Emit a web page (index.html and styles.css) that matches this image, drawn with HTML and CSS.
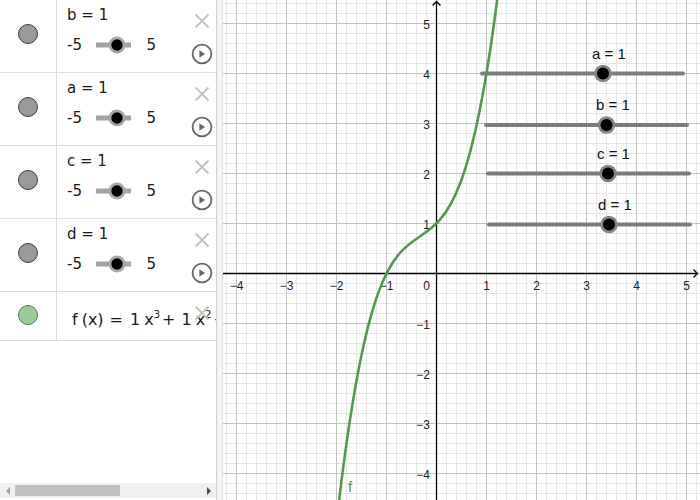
FILE: index.html
```html
<!DOCTYPE html>
<html>
<head>
<meta charset="utf-8">
<link rel="stylesheet" href="styles.css">
</head>
<body>
<div class="app">
  <div class="algebra">
    <div class="row">
      <div class="marker"><span class="dot"></span></div>
      <div class="content">
        <div class="def">b = 1</div>
        <div class="range"><span>-5</span>
          <svg class="mini" viewBox="0 0 35 20"><line x1="0" y1="10" x2="35" y2="10"/><circle class="ring" cx="21" cy="10" r="8.5"/><circle class="knob" cx="21" cy="10" r="5.7"/></svg>
          <span>5</span></div>
      </div>
      <div class="controls">
        <svg class="close" viewBox="0 0 16 16"><path d="M1.5 1.5L14.5 14.5M14.5 1.5L1.5 14.5"/></svg>
        <svg class="play" viewBox="0 0 22 22"><circle cx="11" cy="11" r="9.4"/><path d="M8.4 7.3L14 11L8.4 14.7Z"/></svg>
      </div>
    </div>
    <div class="row">
      <div class="marker"><span class="dot"></span></div>
      <div class="content">
        <div class="def">a = 1</div>
        <div class="range"><span>-5</span>
          <svg class="mini" viewBox="0 0 35 20"><line x1="0" y1="10" x2="35" y2="10"/><circle class="ring" cx="21" cy="10" r="8.5"/><circle class="knob" cx="21" cy="10" r="5.7"/></svg>
          <span>5</span></div>
      </div>
      <div class="controls">
        <svg class="close" viewBox="0 0 16 16"><path d="M1.5 1.5L14.5 14.5M14.5 1.5L1.5 14.5"/></svg>
        <svg class="play" viewBox="0 0 22 22"><circle cx="11" cy="11" r="9.4"/><path d="M8.4 7.3L14 11L8.4 14.7Z"/></svg>
      </div>
    </div>
    <div class="row">
      <div class="marker"><span class="dot"></span></div>
      <div class="content">
        <div class="def">c = 1</div>
        <div class="range"><span>-5</span>
          <svg class="mini" viewBox="0 0 35 20"><line x1="0" y1="10" x2="35" y2="10"/><circle class="ring" cx="21" cy="10" r="8.5"/><circle class="knob" cx="21" cy="10" r="5.7"/></svg>
          <span>5</span></div>
      </div>
      <div class="controls">
        <svg class="close" viewBox="0 0 16 16"><path d="M1.5 1.5L14.5 14.5M14.5 1.5L1.5 14.5"/></svg>
        <svg class="play" viewBox="0 0 22 22"><circle cx="11" cy="11" r="9.4"/><path d="M8.4 7.3L14 11L8.4 14.7Z"/></svg>
      </div>
    </div>
    <div class="row">
      <div class="marker"><span class="dot"></span></div>
      <div class="content">
        <div class="def">d = 1</div>
        <div class="range"><span>-5</span>
          <svg class="mini" viewBox="0 0 35 20"><line x1="0" y1="10" x2="35" y2="10"/><circle class="ring" cx="21" cy="10" r="8.5"/><circle class="knob" cx="21" cy="10" r="5.7"/></svg>
          <span>5</span></div>
      </div>
      <div class="controls">
        <svg class="close" viewBox="0 0 16 16"><path d="M1.5 1.5L14.5 14.5M14.5 1.5L1.5 14.5"/></svg>
        <svg class="play" viewBox="0 0 22 22"><circle cx="11" cy="11" r="9.4"/><path d="M8.4 7.3L14 11L8.4 14.7Z"/></svg>
      </div>
    </div>
    <div class="row fn">
      <div class="marker"><span class="dot green"></span></div>
      <div class="content">
        <div class="formula"><span>f</span><span class="g">(x)</span><span class="eq">=</span><span>1</span><span class="g">x</span><sup>3</sup><span class="pl">+</span><span>1</span><span class="g">x</span><sup>2</sup><span class="pl">+</span><span>1</span><span class="g">x</span><span class="pl">+</span><span>1</span></div>
      </div>
      <div class="controls">
        <svg class="close" viewBox="0 0 16 16"><path d="M1.5 1.5L14.5 14.5M14.5 1.5L1.5 14.5"/></svg>
      </div>
    </div>
    <div class="spacer"></div>
    <div class="hscroll">
      <div class="arrow-btn"><span class="arrow-left"></span></div>
      <div class="track"><div class="thumb"></div></div>
      <div class="arrow-btn"><span class="arrow-right"></span></div>
    </div>
  </div>
  <div class="divider"></div>
  <div class="graphics">
    <svg class="plot" viewBox="223 0 477 500" width="477" height="500">
      <defs>
        <pattern id="grid" x="411" y="248" width="50" height="50" patternUnits="userSpaceOnUse">
          <path class="minor" d="M5.5 0V50M15.5 0V50M35.5 0V50M45.5 0V50M0 5.5H50M0 15.5H50M0 35.5H50M0 45.5H50"/>
          <path class="major" d="M25.5 0V50M0 25.5H50"/>
        </pattern>
      </defs>
      <rect x="223" y="0" width="477" height="500" fill="#fff"/>
      <rect x="223" y="0" width="477" height="500" fill="url(#grid)"/>
      <path class="axis" d="M223 273.5H697.5M693.5 269.5L697.5 273.5L693.5 277.5"/>
      <path class="axis" d="M436.5 500V1.5M432.5 5.5L436.5 1.5L440.5 5.5"/>
      <g class="xlab">
        <text x="236.5" y="290">−4</text>
        <text x="286.5" y="290">−3</text>
        <text x="336.5" y="290">−2</text>
        <text x="386.5" y="290">−1</text>
        <text x="426.7" y="290">0</text>
        <text x="486.5" y="290">1</text>
        <text x="536.5" y="290">2</text>
        <text x="586.5" y="290">3</text>
        <text x="636.5" y="290">4</text>
        <text x="686.5" y="290">5</text>
      </g>
      <g class="ylab">
        <text x="430" y="28.5">5</text>
        <text x="430" y="78.5">4</text>
        <text x="430" y="128.5">3</text>
        <text x="430" y="178.5">2</text>
        <text x="430" y="228.5">1</text>
        <text x="430" y="328.5">−1</text>
        <text x="430" y="378.5">−2</text>
        <text x="430" y="428.5">−3</text>
        <text x="430" y="478.5">−4</text>
      </g>
      <path class="curve" d="M336.5 523.5C391.5 28.5 446.5 441 501.5 -35.85"/>
      <text class="flabel" x="348" y="492">f</text>
      <g class="gslider">
        <line x1="482" y1="73.5" x2="683" y2="73.5"/>
        <circle class="ring" cx="603" cy="73.5" r="8.7"/>
        <circle class="knob" cx="603" cy="73.5" r="6"/>
        <text x="592" y="58.5">a = 1</text>
      </g>
      <g class="gslider">
        <line x1="486" y1="125" x2="687" y2="125"/>
        <circle class="ring" cx="606.5" cy="125" r="8.7"/>
        <circle class="knob" cx="606.5" cy="125" r="6"/>
        <text x="596" y="110">b = 1</text>
      </g>
      <g class="gslider">
        <line x1="488" y1="173.5" x2="689" y2="173.5"/>
        <circle class="ring" cx="608" cy="173.5" r="8.7"/>
        <circle class="knob" cx="608" cy="173.5" r="6"/>
        <text x="597" y="158.5">c = 1</text>
      </g>
      <g class="gslider">
        <line x1="489" y1="224.5" x2="690" y2="224.5"/>
        <circle class="ring" cx="609" cy="224.5" r="8.7"/>
        <circle class="knob" cx="609" cy="224.5" r="6"/>
        <text x="598" y="209.5">d = 1</text>
      </g>
    </svg>
  </div>
</div>
</body>
</html>
```
FILE: styles.css
```css
html, body {
  margin: 0;
  padding: 0;
  background: #fff;
}
body {
  width: 700px;
  height: 500px;
  overflow: hidden;
  font-family: "DejaVu Sans", sans-serif;
  color: #1a1a1a;
}
.app {
  display: flex;
  height: 500px;
}
.algebra {
  width: 216px;
  flex: none;
  display: flex;
  flex-direction: column;
  overflow: hidden;
  background: #fff;
}
.row {
  display: flex;
  flex: none;
  height: 72px;
  border-bottom: 1px solid #dcdcdc;
}
.row.fn {
  height: 48px;
}
.marker {
  width: 57px;
  flex: none;
  box-sizing: border-box;
  border-right: 1px solid #dcdcdc;
  display: flex;
  justify-content: center;
  align-items: flex-start;
  padding-top: 24px;
}
.fn .marker {
  padding-top: 13px;
}
.dot {
  width: 18px;
  height: 18px;
  border-radius: 50%;
  background: #999;
  border: 1px solid #3c3c3c;
  margin-left: -1px;
}
.dot.green {
  background: #99cc99;
  border-color: #4d7d4d;
}
.content {
  flex: 1;
  min-width: 0;
  padding: 5px 0 0 10px;
  font-size: 15px;
}
.fn .content {
  padding: 18px 0 0 15px;
}
.def {
  height: 20px;
  line-height: 20px;
  white-space: nowrap;
}
.range {
  display: flex;
  align-items: center;
  height: 20px;
  line-height: 20px;
  margin-top: 10px;
}
.mini {
  width: 35px;
  height: 20px;
  margin: 0 15px 0 14.5px;
  overflow: visible;
}
.mini line {
  stroke: #a3a3a3;
  stroke-width: 5;
}
.mini .ring {
  fill: #a8a8a8;
}
.mini .knob {
  fill: #000;
}
.controls {
  width: 25px;
  flex: none;
  margin-right: 2px;
  display: flex;
  flex-direction: column;
  align-items: center;
  padding-top: 13px;
}
.close {
  width: 16px;
  height: 16px;
  flex: none;
}
.close path {
  stroke: #c2c2c2;
  stroke-width: 1.8;
  fill: none;
}
.play {
  width: 22px;
  height: 22px;
  flex: none;
  margin-top: 14px;
}
.play circle {
  fill: none;
  stroke: #666;
  stroke-width: 1.8;
}
.play path {
  fill: #666;
}
.formula {
  font-size: 16px;
  line-height: 20px;
  white-space: nowrap;
  color: #1a1a1a;
}
.formula .g {
  margin-left: 4px;
}
.formula .eq {
  margin: 0 7px 0 6px;
}
.formula .pl {
  margin: 0 6px 0 2px;
}
.formula sup {
  font-size: 10px;
  line-height: 0;
  vertical-align: 7px;
}
.spacer {
  flex: 1;
}
.hscroll {
  flex: none;
  height: 15px;
  margin-bottom: 2px;
  background: #f0f0f0;
  display: flex;
  align-items: center;
}
.arrow-btn {
  width: 15px;
  height: 15px;
  flex: none;
  display: flex;
  align-items: center;
  justify-content: center;
}
.arrow-left {
  width: 0;
  height: 0;
  border-top: 4px solid transparent;
  border-bottom: 4px solid transparent;
  border-right: 4px solid #a3a3a3;
}
.arrow-right {
  width: 0;
  height: 0;
  border-top: 4px solid transparent;
  border-bottom: 4px solid transparent;
  border-left: 4px solid #4a4a4a;
}
.track {
  flex: 1;
  height: 11px;
}
.thumb {
  width: 105px;
  height: 11px;
  background: #c1c1c1;
}
.divider {
  width: 7px;
  flex: none;
  box-sizing: border-box;
  border-left: 1px solid #cdcdcd;
  border-right: 1px solid #dedede;
  background: #f3f3f3;
}
.graphics {
  flex: 1;
  overflow: hidden;
}
.plot {
  display: block;
}
.minor {
  stroke: #e6e6e6;
  stroke-width: 1;
  fill: none;
}
.major {
  stroke: #c3c3c3;
  stroke-width: 1;
  fill: none;
}
.axis {
  stroke: #000;
  stroke-width: 1.3;
  fill: none;
}
.xlab text, .ylab text {
  font-family: "Liberation Sans", Arial, sans-serif;
  font-size: 12px;
  fill: #222;
}
.xlab text {
  text-anchor: middle;
}
.ylab text {
  text-anchor: end;
}
.curve {
  fill: none;
  stroke: #4f9a4f;
  stroke-width: 2.6;
}
.flabel {
  font-family: "Liberation Sans", Arial, sans-serif;
  font-size: 15px;
  fill: #4f9a4f;
}
.gslider line {
  stroke: #7c7c7c;
  stroke-width: 4;
  stroke-linecap: round;
}
.gslider .ring {
  fill: #858585;
}
.gslider .knob {
  fill: #000;
}
.gslider text {
  font-family: "Liberation Sans", Arial, sans-serif;
  font-size: 15px;
  fill: #111;
}
```
